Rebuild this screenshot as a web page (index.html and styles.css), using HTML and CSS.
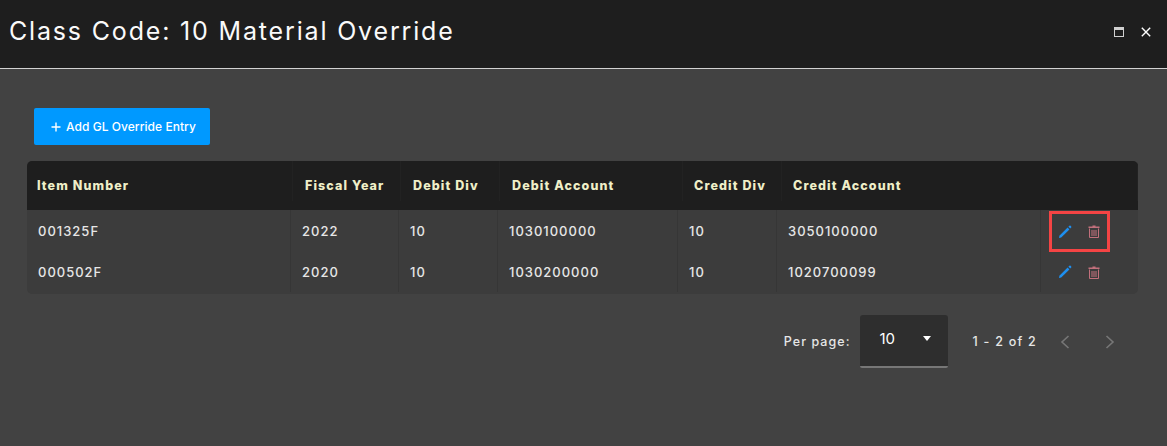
FILE: index.html
```html
<!DOCTYPE html>
<html lang="en">
<head>
<meta charset="utf-8">
<title>Class Code: 10 Material Override</title>
<link rel="stylesheet" href="styles.css">
</head>
<body>
<header class="titlebar">
  <h1 class="title">Class Code: 10 Material Override</h1>
  <div class="window-actions">
    <svg class="win-icon" width="10" height="10" viewBox="0 0 10 10"><rect x="0.5" y="0.5" width="9" height="9" fill="none" stroke="#d0d0d0"/><rect x="1" y="1" width="8" height="2" fill="#d0d0d0"/></svg>
    <svg class="win-icon" width="10" height="10" viewBox="0 0 10 10"><path d="M0.8 0.8L9.2 9.2M9.2 0.8L0.8 9.2" stroke="#fff" stroke-width="1.4" fill="none"/></svg>
  </div>
</header>
<main class="content">
  <button class="add-btn" type="button">
    <svg width="10" height="10" viewBox="0 0 10 10"><path d="M5 0.5V9.5M0.5 5H9.5" stroke="#fff" stroke-width="1.4" fill="none"/></svg>
    <span>Add GL Override Entry</span>
  </button>
  <section class="table">
    <div class="thead">
      <div class="th">Item Number</div>
      <div class="th">Fiscal Year</div>
      <div class="th">Debit Div</div>
      <div class="th">Debit Account</div>
      <div class="th">Credit Div</div>
      <div class="th">Credit Account</div>
      <div class="th"></div>
    </div>
    <div class="tr">
      <div class="td">001325F</div><div class="td">2022</div><div class="td">10</div><div class="td">1030100000</div><div class="td">10</div><div class="td">3050100000</div>
      <div class="td actions">
        <svg width="14" height="14" viewBox="0 0 14 14"><path d="M1 13L1.4 10.8L9.6 2.6L11.4 4.4L3.2 12.6Z" fill="#1e90f0"/><path d="M10.4 1.8L11.4 0.8a0.9 0.9 0 0 1 1.2 0L13.2 1.4a0.9 0.9 0 0 1 0 1.2L12.2 3.6Z" fill="#1e90f0"/></svg>
        <svg width="12" height="13" viewBox="0 0 12 13"><path d="M4.5 0.5H7.5V1.5H11.5V3H0.5V1.5H4.5Z" fill="#c2707c"/><path d="M1.5 3.5V12.5H10.5V3.5" fill="none" stroke="#c2707c"/><path d="M4 5V11M6 5V11M8 5V11" stroke="#c2707c" fill="none"/></svg>
        <div class="highlight"></div>
      </div>
    </div>
    <div class="tr">
      <div class="td">000502F</div><div class="td">2020</div><div class="td">10</div><div class="td">1030200000</div><div class="td">10</div><div class="td">1020700099</div>
      <div class="td actions">
        <svg width="14" height="14" viewBox="0 0 14 14"><path d="M1 13L1.4 10.8L9.6 2.6L11.4 4.4L3.2 12.6Z" fill="#1e90f0"/><path d="M10.4 1.8L11.4 0.8a0.9 0.9 0 0 1 1.2 0L13.2 1.4a0.9 0.9 0 0 1 0 1.2L12.2 3.6Z" fill="#1e90f0"/></svg>
        <svg width="12" height="13" viewBox="0 0 12 13"><path d="M4.5 0.5H7.5V1.5H11.5V3H0.5V1.5H4.5Z" fill="#c2707c"/><path d="M1.5 3.5V12.5H10.5V3.5" fill="none" stroke="#c2707c"/><path d="M4 5V11M6 5V11M8 5V11" stroke="#c2707c" fill="none"/></svg>
      </div>
    </div>
  </section>
  <footer class="pager">
    <span class="per-label">Per page:</span>
    <div class="select"><span>10</span><i class="caret"></i></div>
    <span class="range">1 - 2 of 2</span>
    <svg class="nav first" width="10" height="14" viewBox="0 0 10 14"><path d="M8.5 1L2 7L8.5 13" fill="none" stroke="#777" stroke-width="1.6"/></svg>
    <svg class="nav last" width="10" height="14" viewBox="0 0 10 14"><path d="M1.5 1L8 7L1.5 13" fill="none" stroke="#777" stroke-width="1.6"/></svg>
  </footer>
</main>
</body>
</html>
```
FILE: styles.css
```css
* { box-sizing: border-box; }
html, body { margin: 0; height: 100%; }
body {
  background: #424242;
  color: #fff;
  font-family: Inter, Roboto, "Liberation Sans", sans-serif;
  overflow: hidden;
}
.titlebar {
  height: 69px;
  background: #1e1e1e;
  border-bottom: 1px solid #d2d2d2;
  display: flex;
  align-items: center;
  justify-content: space-between;
  padding: 0 16px 0 9px;
}
.title {
  margin: 0 0 6px;
  font-size: 25px;
  font-weight: 400;
  letter-spacing: 1.83px;
  color: #fafafa;
}
.window-actions { display: flex; align-items: center; gap: 17px; margin-bottom: 5px; }
.content { padding: 39px 29px 0 27px; }
.add-btn {
  margin-left: 7px;
  width: 176px;
  height: 37px;
  border: 0;
  border-radius: 2px;
  background: #0099ff;
  color: #fff;
  font: 500 12px Inter, Roboto, sans-serif;
  letter-spacing: 0.05px;
  display: flex;
  align-items: center;
  gap: 5px;
  padding: 0 0 0 17px;
}
.table {
  margin-top: 16px;
  background: #3c3c3c;
  border-radius: 5px;
  overflow: hidden;
}
.thead, .tr { display: grid; }
.thead {
  grid-template-columns: 266px 108px 99px 183px 99px 1fr;
  height: 49px;
  background: #1e1e1e;
  color: #efefc8;
}
.th {
  font-size: 12.5px;
  font-weight: 800;
  letter-spacing: 1.1px;
  line-height: 49px;
  padding-left: 12px;
  white-space: nowrap;
  height: 40px;
  border-right: 1px solid #222;
}
.th:first-child { padding-left: 10px; }
.th:nth-child(5), .th:nth-child(6) { padding-left: 11px; }
.th:last-child { border-right: 0; display: none; }
.tr {
  grid-template-columns: 264px 108px 99px 180px 99px 264px 1fr;
  height: 42px;
}
.tr + .tr { padding-bottom: 2px; }
.td {
  font-size: 13px;
  font-weight: 500;
  letter-spacing: 1px;
  color: #e6e6e6;
  display: flex;
  align-items: center;
  padding-left: 11px;
  border-right: 1px solid #363636;
}
.td:last-child { border-right: 0; }
.actions {
  position: relative;
  gap: 16px;
  padding-left: 17px;
  padding-top: 1px;
}
.tr + .tr .actions { padding-top: 0; }
.highlight {
  position: absolute;
  left: 8px;
  top: 1px;
  width: 61px;
  height: 41px;
  border: 3px solid #f44444;
}
.pager {
  display: flex;
  align-items: center;
  justify-content: flex-end;
  margin-top: 21px;
  height: 53px;
}
.per-label {
  font-size: 12.5px;
  font-weight: 500;
  letter-spacing: 1.05px;
  color: #e6e6e6;
  margin-right: 9px;
}
.select {
  width: 88px;
  height: 53px;
  background: #2e2e2e;
  border-bottom: 2px solid #777;
  border-radius: 3px 3px 2px 2px;
  display: flex;
  align-items: center;
  justify-content: space-between;
  padding: 0 17px 4px 20px;
  font-size: 15px;
}
.caret {
  width: 0;
  height: 0;
  border-left: 4px solid transparent;
  border-right: 4px solid transparent;
  border-top: 5px solid #fff;
}
.range {
  font-size: 12.5px;
  font-weight: 500;
  letter-spacing: 1.25px;
  color: #e6e6e6;
  margin-left: 25px;
}
.nav.first { margin-left: 23px; }
.nav.last { margin-left: 35px; margin-right: 23px; }
```
